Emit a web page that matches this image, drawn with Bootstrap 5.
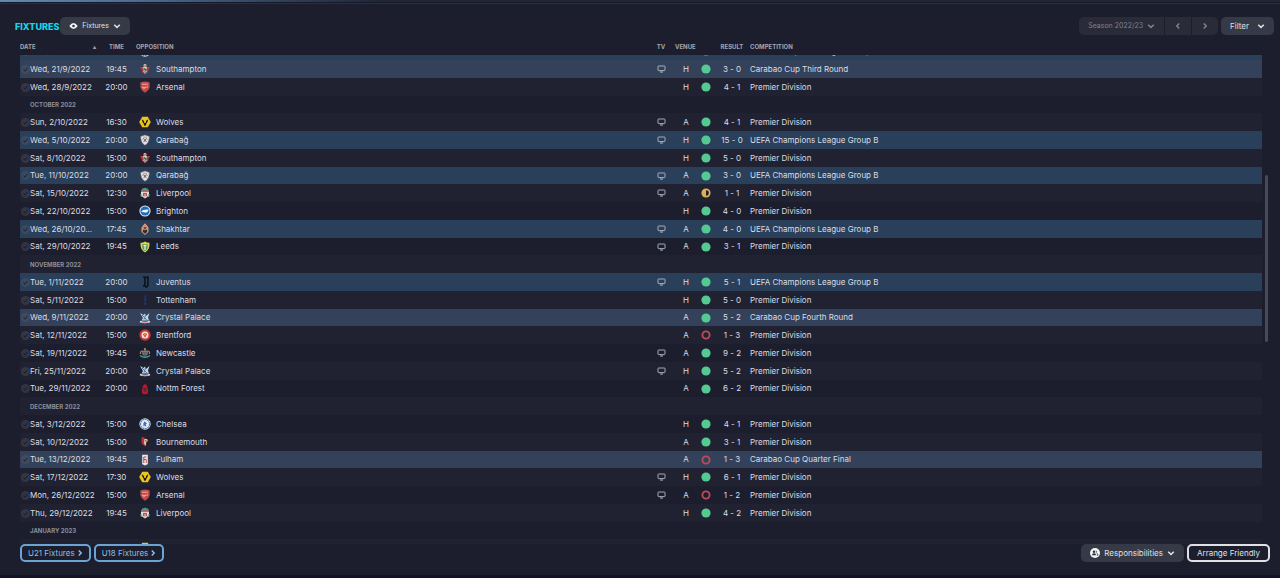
<!DOCTYPE html>
<html lang="en">
<head>
<meta charset="utf-8">
<meta name="viewport" content="width=device-width, initial-scale=1">
<title>Fixtures</title>
<link rel="stylesheet" href="https://cdn.jsdelivr.net/npm/bootstrap@5.3.0/dist/css/bootstrap.min.css">
<script src="https://cdn.jsdelivr.net/npm/bootstrap@5.3.0/dist/js/bootstrap.bundle.min.js"></script>
<style>
  body { background: #1c1e2e; color: #dcdde3; font: 8px/17px Inter, sans-serif; }
  .season-strip { height: 2px; background: linear-gradient(90deg, #6189b3 0, #4b6f96 10%, #2f4059 22%, #212537 30%, #212537 100%); }
  .edge-line { height: 2px; background: #161928; border-bottom: 1px solid #2b2e3e; }
  .bottom-line { height: 3px; background: #171026; }
  .toolbar { padding: 12px 6px 3px 15px; }
  .page-title { font-size: 9px; font-weight: 800; line-height: 17px; color: #14d8ea; padding-top: 2px; margin-right: 1px; }
  .ui-btn { display: inline-flex; align-items: center; height: 18px; padding: 0 9px; border: 0; border-radius: 5px; background: #363946; color: #dfe1e6; font-size: 8px; line-height: 16px; }
  .ui-btn.season-btn { font-size: 7px; }
  .season-group { margin-right: 3px; gap: 1px; }
  .ui-btn.muted-btn { background: #292b39; color: #7f828c; }
  .ui-btn.outline-blue { border: 2px solid #6ba3d2; background: transparent; color: #8dbde2; padding: 0 5px 0 6px; gap: 1px; }
  .ui-btn.outline-white { border: 2px solid #dfe1e6; background: transparent; padding: 0 8px; }
  .page-foot { padding: 0 10px 13px 20px; gap: 3px; }
  .list-area { min-height: 0; }
  .list-head, .list-view { padding-left: 20px; padding-right: 18px; }
  .list-view { min-height: 0; overflow: hidden; }
  .fixture-grid { width: 100%; table-layout: fixed; border-collapse: collapse; }
  .fixture-grid th, .fixture-grid td { padding: 0; white-space: nowrap; overflow: hidden; vertical-align: middle; }
  .fixture-grid thead th { height: 17px; line-height: 16px; color: #a3a5ae; font-size: 6px; font-weight: 700; }
  .fixture-grid tbody tr { height: 18px; }
  .fixture-grid tbody tr:nth-child(4n) { height: 17px; }
  .fixture-grid tbody tr:nth-child(odd) { background: #202231; }
  .fixture-grid tbody tr.euro { background: #2a3f5a; }
  .fixture-grid tbody tr.cup { background: #33425a; }
  .fixture-grid tbody .month { padding-left: 10px; font-size: 6px; font-weight: 700; color: #8b8d97; text-align: left; }
  .fixture-grid thead .opp { padding-left: 3px; }
  .fixture-grid thead .ven { padding-left: 1px; }
  .fixture-grid svg { display: block; margin: 0 auto; }
  .c-check { width: 10px; } .c-date { width: 70px; } .c-time { width: 33px; } .c-crest { width: 23px; }
  .c-tv { width: 26px; } .c-venue { width: 24px; } .c-dot { width: 16px; } .c-score { width: 36px; } .c-comp { width: 512px; }
  .thumb { position: absolute; right: 12px; top: 27%; width: 3px; height: 33%; border-radius: 2px; background: #464956; }
</style>
</head>
<body>
<svg width="0" height="0" class="position-absolute" aria-hidden="true">
  <defs>
    <symbol id="check" viewBox="0 0 8 8"><circle cx="4" cy="4" r="4" fill="#5b5d68" opacity=".35"/><path d="M2.2 4.1l1.3 1.2 2.3-2.6" fill="none" stroke="#161826" stroke-opacity=".7" stroke-width=".9"/></symbol>
    <symbol id="tv" viewBox="0 0 9 8"><rect x="1" y="1" width="7" height="4.6" rx=".6" fill="none" stroke="#b6bac4" stroke-width=".9"/><path d="M3 7h3" stroke="#b6bac4" stroke-width="1"/></symbol>
    <symbol id="win" viewBox="0 0 10 10"><circle cx="5" cy="5" r="4.6" fill="#54ca92"/></symbol>
    <symbol id="loss" viewBox="0 0 10 10"><circle cx="5" cy="5" r="3.6" fill="none" stroke="#bd4a55" stroke-width="1.9"/></symbol>
    <symbol id="draw" viewBox="0 0 10 10"><circle cx="5" cy="5" r="4.6" fill="#dfae56"/><path d="M5 2.2a2.8 2.8 0 010 5.6z" fill="#1c1f2e"/></symbol>
    <symbol id="down" viewBox="0 0 8 8"><path d="M1.2 2.800L4 5.400l2.800-2.600" fill="none" stroke="currentColor" stroke-width="1.500"/></symbol>
    <symbol id="next" viewBox="0 0 8 8"><path d="M2.800 1.400L5.200 4 2.800 6.600" fill="none" stroke="currentColor" stroke-width="1.500"/></symbol>
    <symbol id="prev" viewBox="0 0 8 8"><path d="M5.200 1.400L2.800 4l2.400 2.600" fill="none" stroke="currentColor" stroke-width="1.500"/></symbol>

    <symbol id="southampton" viewBox="0 0 12 12"><path d="M3.500 4h5v4L6 11 3.500 8z" fill="#d9d4d0"/><path d="M1 4h3l.8 3.500L3.500 10 2.600 7z M11 4H8l-.8 3.500L8.500 10 9.400 7z" fill="#b63c42"/><circle cx="6" cy="2.600" r="1.600" fill="#ded8cc"/><path d="M4 3h4" stroke="#a9443f"/><path d="M4.800 5.500l2.400 2" stroke="#37734d" stroke-width="1.800"/><path d="M5 9h2" stroke="#b63c42"/></symbol>
    <symbol id="arsenal" viewBox="0 0 12 12"><path d="M1.700 1.500Q6 0 10.300 1.500V6.500Q9.500 9.800 6 11.500 2.500 9.800 1.700 6.500z" fill="#d0434a" stroke="#8c6a5a" stroke-width=".5"/><path d="M3 3.200h6" stroke="#efb7b0" stroke-width=".9"/><path d="M3 6.300h4.500l1.500-.8" stroke="#e6bf7d" stroke-width="1" fill="none"/><circle cx="5" cy="7.500" r=".8" fill="#e6bf7d"/></symbol>
    <symbol id="wolves" viewBox="0 0 12 12"><path d="M3.200 .8h5.600l3 5.200-3 5.200H3.200L.2 6z" fill="#edc51f"/><path d="M2.600 3.200l2.200 1.600L5.300 7H4zM9.400 3.200L7.200 4.800 6.700 7H8zM4.300 7.600L6 6.800l1.700.8L6.600 9.700H5.400z" fill="#171717"/></symbol>
    <symbol id="qarabag" viewBox="0 0 12 12"><path d="M1.700 2.500L6 1l4.300 1.500Q10.500 8.500 6 11.300 1.500 8.500 1.700 2.500z" fill="#e5e2df" stroke="#887d80" stroke-width=".5"/><path d="M3.500 5.500q1-1.500 2.300 0T4.500 7.500M8.500 5.500q-1-1.500-2.300 0T7.500 7.500" fill="none" stroke="#55484b" stroke-width=".8"/><path d="M4 3.200h4" stroke="#b38b63" stroke-width=".8"/></symbol>
    <symbol id="liverpool" viewBox="0 0 12 12"><path d="M2 3.500h8v5.300L6 11.500 2 8.800z" fill="#e8d8d6"/><path d="M2 3.500Q3 .8 6 .8T10 3.500z" fill="#439b85"/><path d="M2 4.200h8" stroke="#c5444f" stroke-width="1.200"/><path d="M4 6.400h4M6 6v3.600M4.500 7v2M7.500 7v2" stroke="#c83e4b"/><path d="M2 7v2.500h1.500M10 7v2.500H8.500" fill="none" stroke="#439b85"/></symbol>
    <symbol id="brighton" viewBox="0 0 12 12"><circle cx="6" cy="6" r="5.600" fill="#dce9f5"/><circle cx="6" cy="6" r="4.600" fill="#206eb8"/><path d="M2.200 6.500Q4 4.400 9.800 4.600L8.200 7.300Q5 8 2.200 6.500z" fill="#eff6fc"/></symbol>
    <symbol id="shakhtar" viewBox="0 0 12 12"><path d="M6 .7Q10.500 4 9 9L6 11.500 3 9Q1.500 4 6 .7z" fill="#df8759" stroke="#e9c5a9" stroke-width=".6"/><path d="M3.800 7h4.400v2L6 10.800 3.800 9z" fill="#30303a"/><path d="M4.800 4L7.200 6.500M7.200 4L4.800 6.500" stroke="#3a3031" stroke-width=".8"/></symbol>
    <symbol id="leeds" viewBox="0 0 12 12"><path d="M1.500 1.800Q4 2 6 .6 8 2 10.500 1.800 11 8.500 6 11.500 1 8.500 1.500 1.800z" fill="#dcd750"/><path d="M3 3.200h6L8.300 8 6 10.300 3.700 8z" fill="#5b9a57"/><path d="M4.500 4.500h3M6 4v5" stroke="#f2f3e5" stroke-width="1.200"/></symbol>
    <symbol id="juventus" viewBox="0 0 12 12"><path d="M4 1.200h2v7.200Q6 10 4 10M7 1.200h2v7.200Q9 11 6 11" fill="none" stroke="#07090f" stroke-width="1.300"/></symbol>
    <symbol id="spurs" viewBox="0 0 12 12"><path d="M5.500 1l2 .8-.8 2.700.8 2L6 8.500 5 6l.3-2z" fill="#262f70"/><circle cx="6.300" cy="9.800" r="1.400" fill="#262f70"/></symbol>
    <symbol id="palace" viewBox="0 0 12 12"><path d="M1 1l3.500 2L6 1.500 7 4l3.500-3L9 5.500 10 8.500H2.500L4 6z" fill="#c5d5e8"/><path d="M3 3l3 3 2.500 3M6.500 3L5 7.500" stroke="#4977ab" fill="none"/><path d="M1 9.500q5 2 10 0" fill="none" stroke="#e4e6ed" stroke-width="1.600"/><path d="M3 10.200h6" stroke="#ae596c" stroke-width=".7"/></symbol>
    <symbol id="brentford" viewBox="0 0 12 12"><circle cx="6" cy="6" r="5.700" fill="#cf3437"/><circle cx="6" cy="6" r="3.500" fill="#f0e6d8"/><path d="M3.800 5.300Q6 3 8.200 5.300L6 8.500z" fill="#b93430"/><path d="M4.800 5.800h2.400" stroke="#e2b34c" stroke-width="1.200"/></symbol>
    <symbol id="newcastle" viewBox="0 0 12 12"><path d="M3.500 4h5v3L6 9.500 3.500 7z" fill="#30323b" stroke="#9b9b96" stroke-width=".6"/><path d="M6 1v2.500" stroke="#c09c69" stroke-width="1.500"/><path d="M1.500 7Q1 4 3.500 4M10.500 7Q11 4 8.500 4" fill="none" stroke="#a8865d" stroke-width="1.200"/><path d="M1 8.500Q6 12 11 8.500" fill="none" stroke="#439aa0" stroke-width="1.500"/><path d="M5 4v4M7 4v4" stroke="#deded8" stroke-width=".6"/></symbol>
    <symbol id="forest" viewBox="0 0 12 12"><path d="M6 .8Q9 3 8.500 5H3.500Q3 3 6 .8zM3 5.500h6V10l-1.500 1.200h-3L3 10z" fill="#b51a2c"/><path d="M4.500 7.500h3M6 6v3" fill="none" stroke="#541d2a" stroke-width=".9"/></symbol>
    <symbol id="chelsea" viewBox="0 0 12 12"><circle cx="6" cy="6" r="5.700" fill="#dce3ec"/><circle cx="6" cy="6" r="4.600" fill="none" stroke="#547fb8" stroke-width="1.200" stroke-dasharray="2 .6"/><circle cx="6" cy="6" r="3.400" fill="#e9edf3"/><path d="M5 4l2 1.400-1 .8 1 2M5 5v3.200" fill="none" stroke="#315f9f" stroke-width="1.100"/></symbol>
    <symbol id="bournemouth" viewBox="0 0 12 12"><path d="M2.500 1.200h7V7L6 11.500 2.500 7z" fill="#33161b"/><path d="M2.500 1.200h3V8L4.500 9.500 2.500 7z" fill="#bc3139"/><path d="M5.300 3Q9 2.200 8.800 5L7 6.500 7.300 8 6 10.500 5 7z" fill="#e2c4bc"/><path d="M6 4.800h1.500" stroke="#33161b" stroke-width=".7"/></symbol>
    <symbol id="fulham" viewBox="0 0 12 12"><path d="M3 .8h6V10L6 11.500 3 10z" fill="#eceaea"/><path d="M4.800 3v6M4.800 3h2.500M4.800 5.500h2.500" fill="none" stroke="#bd3b44" stroke-width="1"/><path d="M7.300 6v3" stroke="#bd3b44" stroke-width=".8"/><path d="M3 .8v9M9 .8v9" stroke="#55545c" stroke-width=".5"/></symbol>
  </defs>
</svg>

<div class="vh-100 d-flex flex-column">
  <div class="season-strip flex-shrink-0"></div>
  <div class="edge-line flex-shrink-0"></div>

  <header class="toolbar d-flex align-items-center flex-shrink-0">
    <h1 class="page-title mb-0">FIXTURES</h1>
    <button type="button" class="ui-btn season-btn gap-1">
      <svg width="9" height="8" viewBox="0 0 9 8" aria-hidden="true"><path d="M.3 4Q4.500-1.800 8.700 4 4.500 9.800.3 4z" fill="#f4f5f7"/><circle cx="4.500" cy="4" r="1.300" fill="#363946"/></svg>
      Fixtures
      <svg width="8" height="8" aria-hidden="true"><use href="#down"/></svg>
    </button>
    <div class="season-group d-flex ms-auto" role="group" aria-label="Season">
      <button type="button" class="ui-btn season-btn muted-btn rounded-end-0 gap-1">Season 2022/23 <svg width="8" height="8" aria-hidden="true"><use href="#down"/></svg></button>
      <button type="button" class="ui-btn muted-btn rounded-0" aria-label="Previous season"><svg width="8" height="8"><use href="#prev"/></svg></button>
      <button type="button" class="ui-btn muted-btn rounded-start-0" aria-label="Next season"><svg width="8" height="8"><use href="#next"/></svg></button>
    </div>
    <button type="button" class="ui-btn gap-2">Filter <svg width="8" height="8" aria-hidden="true"><use href="#down"/></svg></button>
  </header>

  <main class="list-area flex-grow-1 d-flex flex-column position-relative">
    <div class="list-head flex-shrink-0">
      <table class="fixture-grid">
        <colgroup><col class="c-check"><col class="c-date"><col class="c-time"><col class="c-crest"><col><col class="c-tv"><col class="c-venue"><col class="c-dot"><col class="c-score"><col class="c-comp"></colgroup>
        <thead>
          <tr>
            <th colspan="2"><span class="d-flex justify-content-between pe-1"><span>DATE</span><span>▴</span></span></th>
            <th class="text-center">TIME</th>
            <th colspan="2" class="opp">OPPOSITION</th>
            <th class="text-center">TV</th>
            <th colspan="2" class="ven">VENUE</th>
            <th class="text-center">RESULT</th>
            <th>COMPETITION</th>
          </tr>
        </thead>
      </table>
    </div>
    <div class="list-view flex-grow-1" id="list">
      <table class="fixture-grid" aria-label="Fixtures">
        <colgroup><col class="c-check"><col class="c-date"><col class="c-time"><col class="c-crest"><col><col class="c-tv"><col class="c-venue"><col class="c-dot"><col class="c-score"><col class="c-comp"></colgroup>
        <tbody id="rows"></tbody>
      </table>
    </div>
    <div class="thumb"></div>
  </main>

  <footer class="page-foot d-flex align-items-center flex-shrink-0">
    <button type="button" class="ui-btn outline-blue">U21 Fixtures <svg width="8" height="8" aria-hidden="true"><use href="#next"/></svg></button>
    <button type="button" class="ui-btn outline-blue me-auto">U18 Fixtures <svg width="8" height="8" aria-hidden="true"><use href="#next"/></svg></button>
    <button type="button" class="ui-btn gap-1">
      <svg width="10" height="10" viewBox="0 0 10 10" aria-hidden="true"><circle cx="5" cy="5" r="5" fill="#f4f5f7"/><circle cx="4" cy="3.700" r="1.200" fill="#2b2e3a"/><path d="M2 7.200Q2 5.200 4 5.200T6 7.200z" fill="#2b2e3a"/><path d="M5.800 2.700a1.200 1.200 0 010 2.200M6.600 5.300Q8 5.600 8 7.200H6.800" fill="none" stroke="#2b2e3a" stroke-width=".8"/></svg>
      Responsibilities
      <svg width="8" height="8" aria-hidden="true"><use href="#down"/></svg>
    </button>
    <button type="button" class="ui-btn outline-white">Arrange Friendly</button>
  </footer>
  <div class="bottom-line flex-shrink-0"></div>
</div>

<script>
  const UCL = 'UEFA Champions League Group B', PL = 'Premier Division';
  // date, time, crest, opponent, on TV, venue, outcome, score, competition
  const fixtures = [
    ['Wed, 14/9/2022', '20:00', 'chelsea', 'Shakhtar', 0, 'H', 'win', '3 - 0', UCL],
    ['Wed, 21/9/2022', '19:45', 'southampton', 'Southampton', 1, 'H', 'win', '3 - 0', 'Carabao Cup Third Round'],
    ['Wed, 28/9/2022', '20:00', 'arsenal', 'Arsenal', 0, 'H', 'win', '4 - 1', PL],
    'OCTOBER 2022',
    ['Sun, 2/10/2022', '16:30', 'wolves', 'Wolves', 1, 'A', 'win', '4 - 1', PL],
    ['Wed, 5/10/2022', '20:00', 'qarabag', 'Qarabağ', 1, 'H', 'win', '15 - 0', UCL],
    ['Sat, 8/10/2022', '15:00', 'southampton', 'Southampton', 0, 'H', 'win', '5 - 0', PL],
    ['Tue, 11/10/2022', '20:00', 'qarabag', 'Qarabağ', 1, 'A', 'win', '3 - 0', UCL],
    ['Sat, 15/10/2022', '12:30', 'liverpool', 'Liverpool', 1, 'A', 'draw', '1 - 1', PL],
    ['Sat, 22/10/2022', '15:00', 'brighton', 'Brighton', 0, 'H', 'win', '4 - 0', PL],
    ['Wed, 26/10/20...', '17:45', 'shakhtar', 'Shakhtar', 1, 'A', 'win', '4 - 0', UCL],
    ['Sat, 29/10/2022', '19:45', 'leeds', 'Leeds', 1, 'A', 'win', '3 - 1', PL],
    'NOVEMBER 2022',
    ['Tue, 1/11/2022', '20:00', 'juventus', 'Juventus', 1, 'H', 'win', '5 - 1', UCL],
    ['Sat, 5/11/2022', '15:00', 'spurs', 'Tottenham', 0, 'H', 'win', '5 - 0', PL],
    ['Wed, 9/11/2022', '20:00', 'palace', 'Crystal Palace', 0, 'A', 'win', '5 - 2', 'Carabao Cup Fourth Round'],
    ['Sat, 12/11/2022', '15:00', 'brentford', 'Brentford', 0, 'A', 'loss', '1 - 3', PL],
    ['Sat, 19/11/2022', '19:45', 'newcastle', 'Newcastle', 1, 'A', 'win', '9 - 2', PL],
    ['Fri, 25/11/2022', '20:00', 'palace', 'Crystal Palace', 1, 'H', 'win', '5 - 2', PL],
    ['Tue, 29/11/2022', '20:00', 'forest', 'Nottm Forest', 0, 'A', 'win', '6 - 2', PL],
    'DECEMBER 2022',
    ['Sat, 3/12/2022', '15:00', 'chelsea', 'Chelsea', 0, 'H', 'win', '4 - 1', PL],
    ['Sat, 10/12/2022', '15:00', 'bournemouth', 'Bournemouth', 0, 'A', 'win', '3 - 1', PL],
    ['Tue, 13/12/2022', '19:45', 'fulham', 'Fulham', 0, 'A', 'loss', '1 - 3', 'Carabao Cup Quarter Final'],
    ['Sat, 17/12/2022', '17:30', 'wolves', 'Wolves', 1, 'H', 'win', '6 - 1', PL],
    ['Mon, 26/12/2022', '15:00', 'arsenal', 'Arsenal', 1, 'A', 'loss', '1 - 2', PL],
    ['Thu, 29/12/2022', '19:45', 'liverpool', 'Liverpool', 0, 'H', 'win', '4 - 2', PL],
    'JANUARY 2023',
    ['', '', 'wolves', '', 0, '', '', '', '']
  ];
  const icon = (id, w, h) => id ? `<svg width="${w}" height="${h}" aria-hidden="true"><use href="#${id}"/></svg>` : '';
  document.getElementById('rows').innerHTML = fixtures.map(f => {
    if (typeof f === 'string') return `<tr><th colspan="10" class="month">${f}</th></tr>`;
    const [date, time, crest, team, tv, venue, outcome, score, comp] = f;
    const kind = comp === UCL ? 'euro' : comp.startsWith('Carabao') ? 'cup' : '';
    return `<tr class="${kind}"><td>${icon(date && 'check', 9, 9)}</td><td>${date}</td><td class="text-center">${time}</td>
      <td>${icon(crest, 12, 12)}</td><td>${team}</td><td>${icon(tv && 'tv', 9, 8)}</td><td class="text-center">${venue}</td>
      <td>${icon(outcome, 10, 10)}</td><td class="text-center">${score}</td><td>${comp}</td></tr>`;
  }).join('');
  document.getElementById('list').scrollTop = 13;
</script>
</body>
</html>
